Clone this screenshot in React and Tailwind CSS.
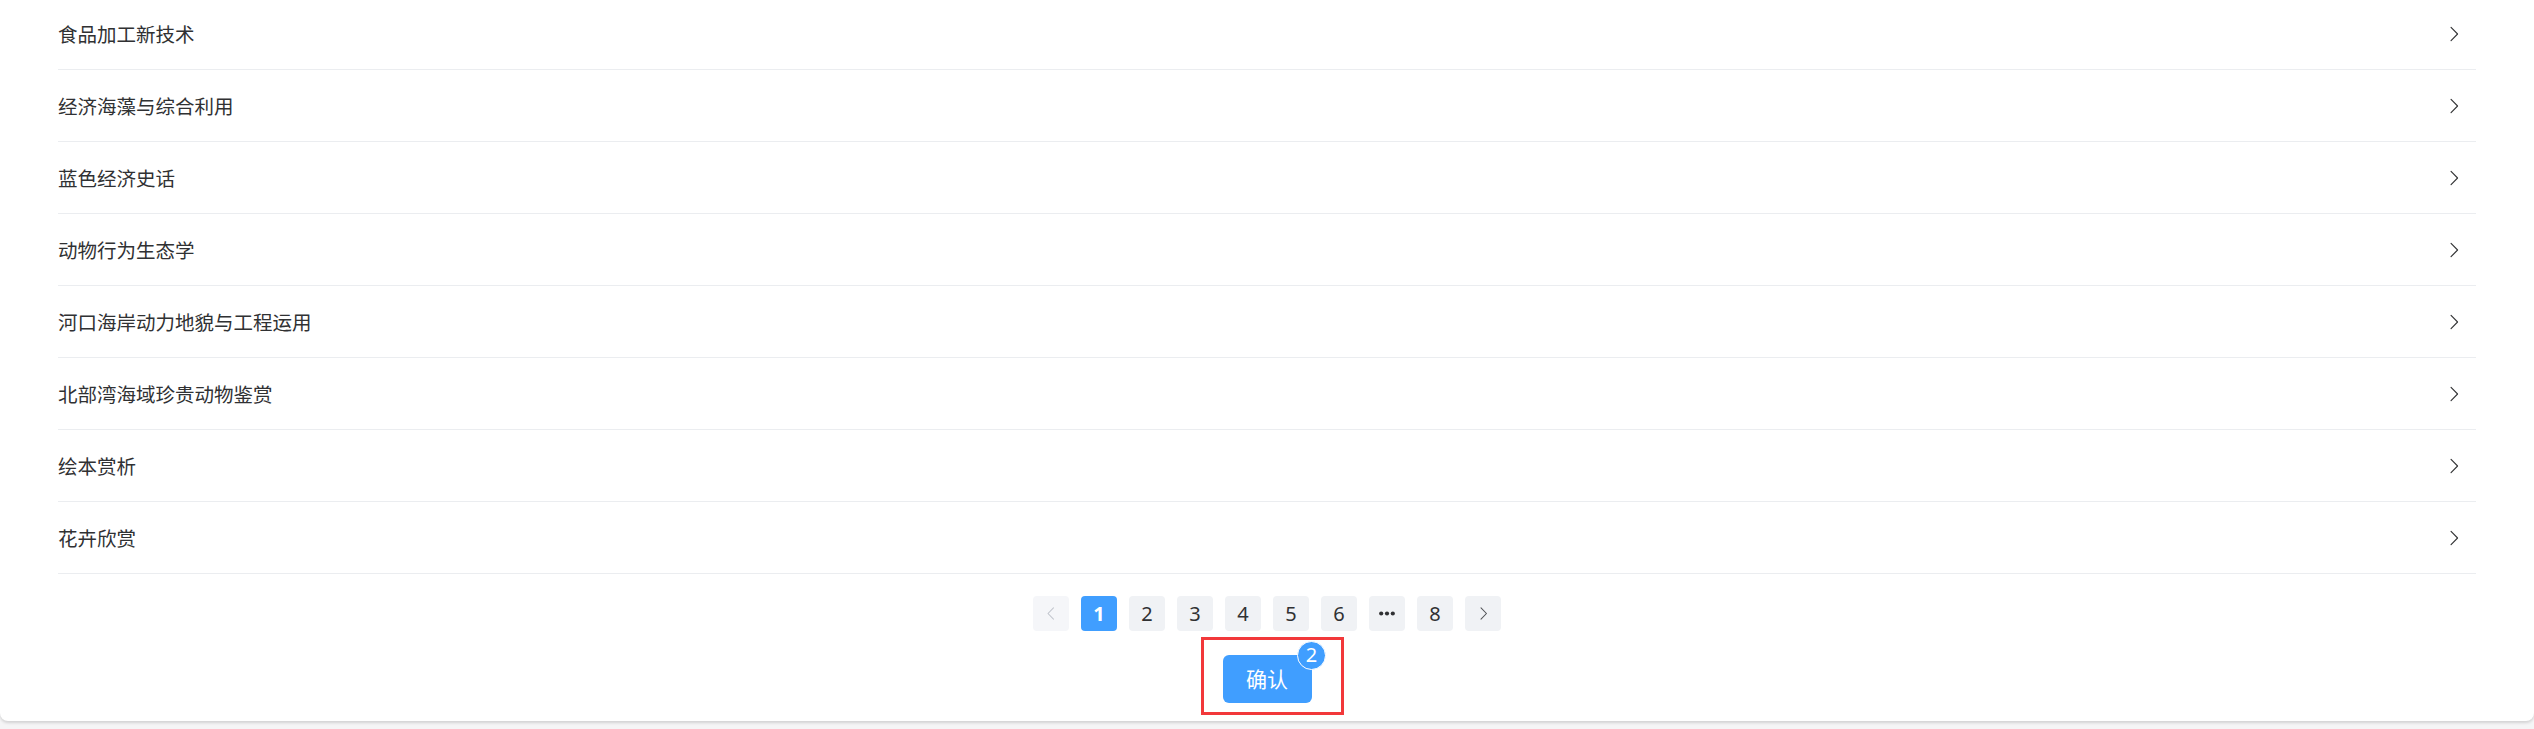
import React, { useState } from 'react';

const courses = [
  '食品加工新技术',
  '经济海藻与综合利用',
  '蓝色经济史话',
  '动物行为生态学',
  '河口海岸动力地貌与工程运用',
  '北部湾海域珍贵动物鉴赏',
  '绘本赏析',
  '花卉欣赏',
];

const ArrowRight = ({ className }) => (
  <svg viewBox="0 0 1024 1024" className={className} fill="currentColor">
    <path d="M340.864 149.312a30.592 30.592 0 0 0 0 42.752L652.736 512 340.864 831.872a30.592 30.592 0 0 0 0 42.752 29.12 29.12 0 0 0 41.728 0L714.24 534.336a32 32 0 0 0 0-44.672L382.592 149.376a29.12 29.12 0 0 0-41.728 0z" />
  </svg>
);

const ArrowLeft = ({ className }) => (
  <svg viewBox="0 0 1024 1024" className={className} fill="currentColor">
    <path d="M609.408 149.376 277.76 489.6a32 32 0 0 0 0 44.672l331.648 340.352a29.12 29.12 0 0 0 41.728 0 30.592 30.592 0 0 0 0-42.752L339.264 512l311.872-319.872a30.592 30.592 0 0 0 0-42.688 29.12 29.12 0 0 0-41.728-.064z" />
  </svg>
);

const MoreDots = () => (
  <svg viewBox="0 0 16 5" className="w-[16px] h-[5px]" fill="currentColor">
    <circle cx="2.2" cy="2.5" r="2.1" />
    <circle cx="8" cy="2.5" r="2.1" />
    <circle cx="13.8" cy="2.5" r="2.1" />
  </svg>
);

const PageBtn = ({ children, active, disabled, onClick }) => (
  <button
    onClick={onClick}
    className={
      'w-[36px] h-[35px] rounded-[4px] flex items-center justify-center text-[20px] ' +
      (active
        ? 'bg-[#409eff] text-white font-bold'
        : disabled
        ? 'bg-[#f5f6f9] text-[#c0c4cc]'
        : 'bg-[#f0f2f5] text-[#303133]')
    }
  >
    {children}
  </button>
);

export default function App() {
  const [page, setPage] = useState(1);

  return (
    <div
      className="w-[2534px] h-[729px] overflow-hidden bg-[#f5f5f6]"
      style={{ fontFamily: '"Noto Sans", "Noto Sans CJK SC", sans-serif' }}
    >
      <div className="bg-white rounded-b-[8px] shadow-[0_2px_3px_rgba(0,0,0,0.14)] px-[58px] pb-[18px] -mt-[2px]">
        <div>
          {courses.map((name) => (
            <div
              key={name}
              className="h-[72px] border-b border-[#ebedf0] flex items-center justify-between text-[#303133]"
            >
              <span className="text-[19.5px] pt-[1px]" style={{ fontFamily: '"Noto Sans CJK SC", sans-serif' }}>
                {name}
              </span>
              <ArrowRight className="w-[20px] h-[20px] mr-[12px] text-[#303133]" />
            </div>
          ))}
        </div>

        <div className="mt-[22px] flex justify-center gap-[12px]">
          <PageBtn disabled>
            <ArrowLeft className="w-[17px] h-[17px]" />
          </PageBtn>
          {[1, 2, 3, 4, 5, 6].map((n) => (
            <PageBtn key={n} active={page === n} onClick={() => setPage(n)}>
              {n}
            </PageBtn>
          ))}
          <PageBtn>
            <MoreDots />
          </PageBtn>
          <PageBtn active={page === 8} onClick={() => setPage(8)}>
            8
          </PageBtn>
          <PageBtn>
            <ArrowRight className="w-[17px] h-[17px] text-[#505256]" />
          </PageBtn>
        </div>

        <div className="mt-[24px] flex justify-center">
          <div className="relative">
            <div className="absolute -left-[22px] -top-[18px] -right-[32px] -bottom-[12px] border-[3px] border-[#f2383a]" />
            <button
              className="relative w-[89px] h-[48px] rounded-[6px] bg-[#409eff] text-white text-[21px] flex items-center justify-center"
              style={{ fontFamily: '"Noto Sans CJK SC", sans-serif' }}
            >
              确认
            </button>
            <span className="absolute -right-[14.5px] -top-[14.5px] w-[29px] h-[29px] rounded-full bg-[#409eff] border border-white text-white text-[20px] flex items-center justify-center leading-none">
              2
            </span>
          </div>
        </div>
      </div>
    </div>
  );
}
